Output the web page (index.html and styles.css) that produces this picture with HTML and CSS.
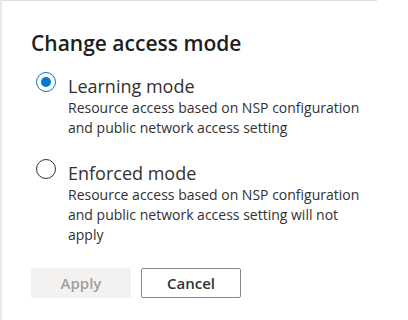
FILE: index.html
```html
<!doctype html>
<html lang="en">
<head>
    <meta charset="UTF-8">
    <title>Change access mode</title>
    <link rel="stylesheet" href="styles.css">
</head>
<body>
<div class="panel">
    <h2 class="title">Change access mode</h2>
    <div class="options">
        <label class="option">
            <span class="radio checked"></span>
            <span class="text">
                <span class="label">Learning mode</span>
                <span class="desc">Resource access based on NSP configuration and public network access setting</span>
            </span>
        </label>
        <label class="option">
            <span class="radio"></span>
            <span class="text">
                <span class="label">Enforced mode</span>
                <span class="desc">Resource access based on NSP configuration and public network access setting will not apply</span>
            </span>
        </label>
    </div>
    <div class="btns">
        <a href="javascript:;" class="btn disabled">Apply</a>
        <a href="javascript:;" class="btn">Cancel</a>
    </div>
</div>
</body>
</html>
```

FILE: styles.css
```css
*{
    margin: 0;
    padding: 0;
    box-sizing: border-box;
}

body{
    background-color: #fff;
    font-family: "Open Sans", "Noto Sans", sans-serif;
    color: #323130;
}

.panel{
    width: 377px;
    height: 320px;
    border-top: 1px solid #e1dfdd;
    border-left: 2px solid #edebe9;
    padding: 28px 0 0 29px;
}
.title{
    font-size: 21px;
    font-weight: 600;
    line-height: 28px;
    color: #201f1e;
    margin-bottom: 15px;
}
.options{
    display: flex;
    flex-direction: column;
    gap: 21px;
}
.option{
    display: flex;
    gap: 12px;
    padding-left: 5px;
}
.radio{
    flex: none;
    width: 20px;
    height: 20px;
    border: 1px solid #323130;
    border-radius: 50%;
    display: flex;
    align-items: center;
    justify-content: center;
}
.radio.checked{
    border-color: #0078d4;
}
.radio.checked::after{
    content: "";
    width: 10px;
    height: 10px;
    border-radius: 50%;
    background-color: #0078d4;
}
.text{
    display: flex;
    flex-direction: column;
    width: 298px;
    padding-top: 2px;
}
.label{
    font-size: 18px;
    line-height: 24px;
}
.desc{
    font-size: 14px;
    line-height: 20px;
}
.btns{
    display: flex;
    gap: 10px;
    margin-top: 23px;
}
.btn{
    width: 100px;
    height: 30px;
    border-radius: 2px;
    border: 1px solid #8a8886;
    text-align: center;
    line-height: 28px;
    font-size: 15px;
    font-weight: 600;
    color: #323130;
    text-decoration: none;
}
.btn.disabled{
    border-color: #f3f2f1;
    background-color: #f3f2f1;
    color: #a19f9d;
}
```
